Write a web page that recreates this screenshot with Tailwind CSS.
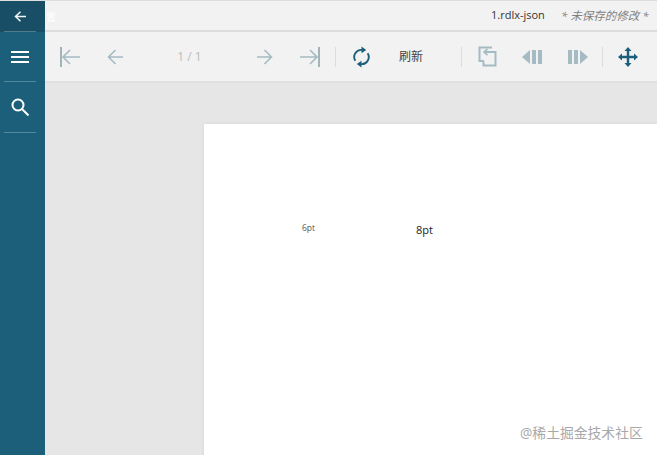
<!DOCTYPE html>
<html><head><meta charset="utf-8"><script src="https://cdn.jsdelivr.net/npm/@tailwindcss/browser@4"></script></head>
<body class="m-0">
<div class="relative flex w-[657px] h-[455px] overflow-hidden bg-[#e6e6e6] font-['Open_Sans','Noto_Sans_CJK_SC',sans-serif]">
  <aside class="w-[45px] shrink-0 flex flex-col bg-[#1c5f7a]">
    <div class="h-[32px] bg-[#194f66] border-t border-[#dedede]">
      <div class="ml-[4px] w-[32px] h-[31px] flex items-center justify-center border-b border-white/25">
        <svg width="12" height="11" viewBox="0 0 12 11" fill="none" stroke="#f2f6f8" stroke-width="1.5"><path d="M12 5.500H1.500M6.500 .7 1.500 5.500l5 4.800"/></svg>
      </div>
    </div>
    <div class="ml-[4px] w-[32px] h-[50px] flex items-center justify-center border-b border-white/25">
      <svg width="18" height="12" viewBox="0 0 18 12" fill="#fff"><rect y="0" width="18" height="2"/><rect y="5" width="18" height="2"/><rect y="10" width="18" height="2"/></svg>
    </div>
    <div class="ml-[4px] w-[32px] h-[51px] flex items-center justify-center border-b border-white/25">
      <svg width="18" height="18" viewBox="0 0 18 18" fill="none" stroke="#fff" stroke-width="2"><circle cx="7" cy="7" r="5.500"/><path d="m11 11 6.500 6.500"/></svg>
    </div>
  </aside>
  <main class="flex-1 flex flex-col min-w-0">
    <header class="h-[32px] shrink-0 flex items-center pl-[446px] bg-[#f2f2f2] border-t border-b-2 border-t-[#dedede] border-b-[#dcdcdc] text-[#333]">
      <span class="w-[70px] text-[11px]">1.rdlx-json</span>
      <span class="italic text-[11.500px] whitespace-nowrap text-[#808080]">* 未保存的修改 *</span>
    </header>
    <nav class="h-[51px] shrink-0 flex items-center pl-[2px] bg-[#f2f2f2] border-b-2 border-[#e0e0e0]">
      <div class="w-[45px] flex justify-center">
        <svg width="20" height="20" viewBox="0 0 20 20" fill="none" stroke="#a4bbc3" stroke-width="1.600"><path d="M1 0v20" stroke-width="2" stroke="#a0b4ba"/><path d="M20 10H3M10 3 3 10l7 7"/></svg>
      </div>
      <div class="w-[45px] flex justify-center">
        <svg width="16" height="16" viewBox="0 0 16 16" fill="none" stroke="#a4bbc3" stroke-width="1.600"><path d="M16 8H1.500M8.500 1 1.500 8l7 7"/></svg>
      </div>
      <div class="w-[105px] text-center text-[12px] text-[#bbbbbb]">1 / 1</div>
      <div class="w-[45px] flex justify-center">
        <svg width="16" height="16" viewBox="0 0 16 16" fill="none" stroke="#a4bbc3" stroke-width="1.600"><path d="M0 8h14.500M7.500 1l7 7-7 7"/></svg>
      </div>
      <div class="w-[45px] flex justify-center">
        <svg width="20" height="20" viewBox="0 0 20 20" fill="none" stroke="#a4bbc3" stroke-width="1.600"><path d="M19 0v20" stroke-width="2" stroke="#a0b4ba"/><path d="M0 10h17M10 3l7 7-7 7"/></svg>
      </div>
      <div class="w-px h-[20px] ml-[3px] bg-[#dcdcdc]"></div>
      <div class="w-[50px] flex justify-center">
        <svg width="17" height="22" viewBox="0 0 18 22" fill="none" stroke="#1c5f7a" stroke-width="2"><path d="M2.500 15A7.500 7.500 0 0 1 9.500 3.500M15.500 7A7.500 7.500 0 0 1 8.500 18.500"/><path d="M9 0l5 3.500L9 7zM9 15l-5 3.500L9 22z" fill="#1c5f7a" stroke="none"/></svg>
      </div>
      <div class="w-[50px] text-center text-[12px] text-[#444]">刷新</div>
      <div class="w-px h-[20px] ml-[25px] bg-[#dcdcdc]"></div>
      <div class="w-[50px] flex justify-center">
        <svg width="19" height="21" viewBox="0 0 19 21" fill="none" stroke="#a4bbc3" stroke-width="2"><path d="M14 1.500H1.500V15H6"/><path d="M5.500 15.500v4h12V6H6"/><path d="M9.500 2.800 6 6l3.500 3.200" stroke-width="1.600"/></svg>
      </div>
      <div class="w-[40px] flex justify-center">
        <svg width="21" height="14" viewBox="0 0 21 14" fill="#a4bbc3"><path d="M0 7 8 0v14z"/><rect x="10" width="4" height="14"/><rect x="16" width="4" height="14"/></svg>
      </div>
      <div class="w-[50px] flex justify-center">
        <svg width="21" height="14" viewBox="0 0 21 14" fill="#a4bbc3"><rect x="1" width="4" height="14"/><rect x="7" width="4" height="14"/><path d="M21 7l-8-7v14z"/></svg>
      </div>
      <div class="w-px h-[20px] bg-[#dcdcdc]"></div>
      <div class="w-[50px] flex justify-center">
        <svg width="20" height="20" viewBox="0 0 20 20" fill="#1c5f7a"><path d="M10 0l3.500 4h-2.300v4.800H16V6.500l4 3.500-4 3.500v-2.300h-4.800V16h2.300L10 20l-3.500-4h2.300v-4.800H4v2.300L0 10l4-3.500v2.300h4.800V4H6.500z"/></svg>
      </div>
    </nav>
    <section class="flex-1 pl-[159px] pt-[41px] overflow-hidden">
      <div class="relative h-[400px] bg-white shadow-[0_0_4px_rgba(0,0,0,0.08)]">
        <span class="absolute left-[98px] top-[99px] text-[8.500px] leading-[10px] text-[#555]">6pt</span>
        <span class="absolute left-[212px] top-[98px] text-[11px] leading-[15px] text-[#222]">8pt</span>
      </div>
    </section>
  </main>
  <span class="absolute left-[46px] top-[11px] text-[10px] leading-[12px] text-white">置</span>
  <span class="absolute left-[520px] top-[424px] text-[13.800px] leading-[18px] text-[#a8a8a8]">@稀土掘金技术社区</span>
</div>
</body></html>
